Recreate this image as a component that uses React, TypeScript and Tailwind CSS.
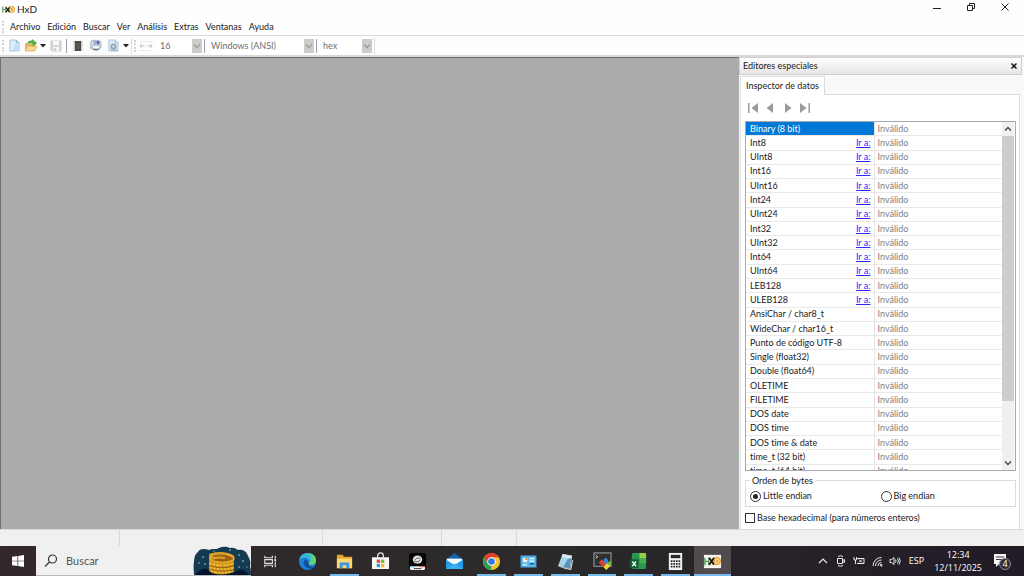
import type { ReactNode } from "react";
import clsx from "clsx";

const menus = ["Archivo", "Edición", "Buscar", "Ver", "Análisis", "Extras", "Ventanas", "Ayuda"];

const rows: { name: string; link?: boolean }[] = [
  { name: "Binary (8 bit)" },
  { name: "Int8", link: true },
  { name: "UInt8", link: true },
  { name: "Int16", link: true },
  { name: "UInt16", link: true },
  { name: "Int24", link: true },
  { name: "UInt24", link: true },
  { name: "Int32", link: true },
  { name: "UInt32", link: true },
  { name: "Int64", link: true },
  { name: "UInt64", link: true },
  { name: "LEB128", link: true },
  { name: "ULEB128", link: true },
  { name: "AnsiChar / char8_t" },
  { name: "WideChar / char16_t" },
  { name: "Punto de código UTF-8" },
  { name: "Single (float32)" },
  { name: "Double (float64)" },
  { name: "OLETIME" },
  { name: "FILETIME" },
  { name: "DOS date" },
  { name: "DOS time" },
  { name: "DOS time & date" },
  { name: "time_t (32 bit)" },
  { name: "time_t (64 bit)" },
];

function HxDLogo({ className }: { className?: string }) {
  return (
    <svg viewBox="0 0 18 14" className={className} aria-hidden="true">
      <path d="M1 3v8M5 3v8M1 7h4" stroke="#5f9a62" strokeWidth="1.6" fill="none" />
      <circle cx="13" cy="7" r="4.8" fill="#e7a52e" />
      <path d="M11.5 4.2h1.6a2.7 2.7 0 0 1 0 5.6h-1.6z" stroke="#fbe6a8" strokeWidth="1.3" fill="none" />
      <path d="M5.5 4l5 6.5M10.5 4l-5 6.5" stroke="#161616" strokeWidth="1.8" />
    </svg>
  );
}

function Grip() {
  return <span className="h-3 border-l-2 border-dotted border-gray-300" />;
}

function Chevron({ className }: { className?: string }) {
  return (
    <svg viewBox="0 0 8 8" className={className} fill="none" stroke="currentColor" strokeWidth="1.3" aria-hidden="true">
      <path d="M1 2.5l3 3 3-3" />
    </svg>
  );
}

function Caret() {
  return (
    <svg viewBox="0 0 6 4" className="ml-[2px] h-1 w-1.5 shrink-0" aria-hidden="true">
      <path d="M0 0h6L3 3.5z" fill="#222" />
    </svg>
  );
}

function ToolButton({ label, children }: { label: string; children: ReactNode }) {
  return (
    <button type="button" aria-label={label} className="flex h-4 shrink-0 items-center justify-center">
      {children}
    </button>
  );
}

function Combo({ label, value, className }: { label: string; value: string; className: string }) {
  return (
    <div className={clsx("relative h-4 shrink-0", className)}>
      <select
        aria-label={label}
        disabled
        className="h-full w-full appearance-none bg-white pl-1 text-[9px] text-[#6d6d6d] opacity-100"
      >
        <option>{value}</option>
      </select>
      <span className="pointer-events-none absolute inset-y-px right-0 flex w-[10px] items-center justify-center bg-[#cccccc] text-[#9a9a9a]">
        <Chevron className="size-2" />
      </span>
    </div>
  );
}

function TitleBar() {
  return (
    <header className="flex h-[18px] items-center justify-between pl-[2px]">
      <div className="flex items-center gap-[2px]">
        <HxDLogo className="h-[11px] w-[13px]" />
        <h1 className="text-[10px]">HxD</h1>
      </div>
      <div className="flex gap-[22px] pr-[13px] pb-1 text-[#222]">
        <button type="button" aria-label="Minimizar">
          <svg viewBox="0 0 12 12" className="size-3" stroke="currentColor">
            <path d="M2 7.5h8" />
          </svg>
        </button>
        <button type="button" aria-label="Restaurar">
          <svg viewBox="0 0 12 12" className="size-3" stroke="currentColor" fill="none">
            <path d="M2.5 4.5h5v5h-5zM4.5 4V2.5h5v5H8" />
          </svg>
        </button>
        <button type="button" aria-label="Cerrar">
          <svg viewBox="0 0 12 12" className="size-3" stroke="currentColor">
            <path d="M2.5 2.5l7 7M9.5 2.5l-7 7" />
          </svg>
        </button>
      </div>
    </header>
  );
}

function Toolbar() {
  return (
    <div className="flex h-[21px] items-center border-b-2 border-[#d9d9d9] bg-[#fdfdfd] pl-[2px]">
      <div className="flex items-center">
        <Grip />
        <div className="flex items-center gap-1 pl-[5px]">
          <ToolButton label="Nuevo">
            <svg viewBox="0 0 12 14" className="h-[13px] w-[11px]">
              <path d="M1 1h7l3 3v9H1z" fill="#dff0fc" stroke="#9fc3df" />
              <path d="M8 1v3h3" fill="#fff" stroke="#78a8cf" />
              <path d="M6 6h4v6H4z" fill="#bfe0f7" />
            </svg>
          </ToolButton>
          <ToolButton label="Abrir">
            <svg viewBox="0 0 14 13" className="h-[13px] w-[14px]">
              <path d="M1 4h4l1 1h5v7H1z" fill="#e6b95a" />
              <path d="M3 7h10l-2 5H1z" fill="#f6d98c" stroke="#d5a040" strokeWidth=".6" />
              <path d="M3 5c1-3 3-4 5-3.5V0l5 4-4 4V5.5C7 4 5 4 3 5z" fill="#4fae4a" />
            </svg>
            <Caret />
          </ToolButton>
          <ToolButton label="Guardar">
            <svg viewBox="0 0 12 12" className="size-3">
              <path d="M1 1h10v10H2l-1-1z" fill="#d6d6d6" stroke="#cbcbcb" />
              <path d="M3 1h6v4H3z" fill="#f9f9f9" />
              <path d="M3 7h6v4H3z" fill="#f2f2f2" />
              <path d="M4 8h1.5v3H4z" fill="#c4c4c4" />
            </svg>
          </ToolButton>
        </div>
        <span className="ml-1 h-[14px] w-px bg-gray-400" />
        <div className="flex items-center gap-[5px] pl-[5px]">
          <ToolButton label="Abrir RAM">
            <svg viewBox="0 0 12 12" className="size-3">
              <path d="M2.5 1.5v9M9.5 1.5v9" stroke="#9a9a9a" strokeDasharray="1 1" strokeWidth="2" />
              <path d="M3 1h6v10H3z" fill="#4b4b4b" />
              <path d="M4.5 3h3v6h-3z" fill="#5c5c5c" />
            </svg>
          </ToolButton>
          <ToolButton label="Abrir disco">
            <svg viewBox="0 0 14 13" className="h-[13px] w-[14px]">
              <path d="M2 2l5-1 5 2v6l-5 3-6-3z" fill="#d3d8e2" stroke="#a0a8b9" strokeWidth=".7" />
              <path d="M4 1.5h7v4H5z" fill="#a3acdd" />
              <path d="M9 2v3" stroke="#39439f" strokeWidth="1.4" />
              <ellipse cx="7" cy="8" rx="4" ry="2" fill="#f4f6fa" stroke="#9aa1af" strokeWidth=".7" />
              <path d="M4 10.5h6" stroke="#777" />
            </svg>
          </ToolButton>
          <ToolButton label="Abrir imagen de disco">
            <svg viewBox="0 0 12 14" className="mr-[2px] h-[13px] w-[11px]">
              <path d="M1 1h7l3 3v9H1z" fill="#dcebf8" stroke="#a9c2da" />
              <path d="M8 1v3h3" fill="#fff" stroke="#8fb0cf" />
              <circle cx="6" cy="8" r="3.3" fill="#8ca5c0" />
              <circle cx="6" cy="8" r="1.2" fill="#eaf2f9" />
              <path d="M3 12h7" stroke="#8c99a9" />
            </svg>
            <Caret />
          </ToolButton>
        </div>
      </div>
      <div className="ml-[2px] flex items-center border-l border-[#dedede] pl-[2px]">
        <Grip />
        <svg viewBox="0 0 14 12" className="mx-[3px] h-3 w-[14px]" fill="none" stroke="#c2c2c2" aria-hidden="true">
          <path d="M1 6h4.5M13 6H8.5M3 4L1 6l2 2M11 4l2 2-2 2" />
          <path d="M1 1.5h12M1 10.5h12" stroke="#ebebeb" />
        </svg>
        <Combo label="Bytes por fila" value="16" className="w-[46px]" />
        <span className="mx-[2px] h-[14px] w-px bg-gray-400" />
        <Combo label="Juego de caracteres" value="Windows (ANSI)" className="w-[107px]" />
        <span className="mx-[2px] h-[14px] w-px bg-gray-400" />
        <Combo label="Base de desplazamiento" value="hex" className="w-[53px]" />
        <span className="ml-[2px] h-4 w-px bg-[#dedede]" />
      </div>
    </div>
  );
}

function NavButton({ label, path }: { label: string; path: string }) {
  return (
    <button type="button" aria-label={label}>
      <svg viewBox="0 0 11 10" className="h-[10px] w-[11px]" fill="#9b9b9b">
        <path d={path} />
      </svg>
    </button>
  );
}

function DataTable() {
  return (
    <div className="flex min-h-0 flex-1 overflow-hidden border border-[#a5a9b0] bg-white pr-px">
      <div className="min-w-0 flex-1 overflow-hidden">
        <table className="h-[357px] w-full table-fixed border-collapse leading-[12px]">
          <colgroup>
            <col className="w-1/2" />
            <col className="w-1/2" />
          </colgroup>
          <tbody>
            {rows.map((row, i) => (
              <tr key={row.name} className="border-b border-[#e9e9e9]">
                <td
                  className={clsx(
                    "overflow-hidden border-r border-[#e3e3e3] py-0 pr-[3px] pl-1 whitespace-nowrap",
                    i === 0 && "bg-[#0078d7] text-white",
                  )}
                >
                  <div className="flex justify-between">
                    <span>{row.name}</span>
                    {row.link && (
                      <a href="#" className="text-[#2a2aff] underline">
                        Ir a:
                      </a>
                    )}
                  </div>
                </td>
                <td className="py-0 pl-[3px] text-[#808080]">Inválido</td>
              </tr>
            ))}
          </tbody>
        </table>
      </div>
      <div className="flex w-3 flex-col items-center bg-[#f0f0f0] text-[#444]">
        <Chevron className="my-[3px] size-2 shrink-0 rotate-180" />
        <div className="w-full grow-[267] bg-[#cdcdcd]" />
        <div className="w-full grow-[55]" />
        <Chevron className="my-[3px] size-2 shrink-0" />
      </div>
    </div>
  );
}

function Inspector() {
  return (
    <aside className="flex w-[285px] shrink-0 flex-col bg-[#f9f9f9] pr-[2px]">
      <div className="flex h-[18px] shrink-0 items-center justify-between border border-[#cfcfcf] bg-linear-to-b from-white to-[#e6e6e6] pr-[3px] pl-[3px]">
        <h2>Editores especiales</h2>
        <button type="button" aria-label="Cerrar panel">
          <svg viewBox="0 0 8 8" className="size-2" stroke="#111" strokeWidth="1.5">
            <path d="M1.5 1.5l5 5M6.5 1.5l-5 5" />
          </svg>
        </button>
      </div>
      <div className="flex min-h-0 flex-1 flex-col pt-px pr-[2px] pl-px">
        <div role="tablist" className="flex">
          <button
            role="tab"
            aria-selected="true"
            type="button"
            className="relative z-10 -mb-px h-[19px] border border-b-0 border-[#dcdcdc] bg-white px-[5px]"
          >
            Inspector de datos
          </button>
        </div>
        <div className="flex min-h-0 flex-1 flex-col border border-b-0 border-[#dcdcdc] bg-white pr-[3px] pl-1">
          <div className="flex h-[26px] shrink-0 items-center gap-[6px] pl-[3px]">
            <NavButton label="Primero" path="M0 0h1.5v10H0zM10 0v10L3.5 5z" />
            <NavButton label="Anterior" path="M8 0v10L1.5 5z" />
            <NavButton label="Siguiente" path="M3 0v10l6.5-5z" />
            <NavButton label="Último" path="M1 0v10l6.5-5zM9.5 0H11v10H9.5z" />
          </div>
          <DataTable />
          <fieldset className="mt-1 shrink-0 border border-[#dcdcdc] px-1 pb-1">
            <legend className="px-[2px] leading-[11px]">Orden de bytes</legend>
            <div className="grid grid-cols-2 pt-1 leading-[12px]">
              <label className="flex items-center gap-[2px]">
                <input
                  type="radio"
                  name="order"
                  defaultChecked
                  className="size-[11px] appearance-none rounded-full border border-[#333] bg-white bg-clip-content p-[2px] checked:bg-[#222]"
                />
                Little endian
              </label>
              <label className="flex items-center gap-[2px]">
                <input
                  type="radio"
                  name="order"
                  className="size-[11px] appearance-none rounded-full border border-[#333] bg-white bg-clip-content p-[2px] checked:bg-[#222]"
                />
                Big endian
              </label>
            </div>
          </fieldset>
          <label className="flex h-[22px] shrink-0 items-center gap-[2px]">
            <input type="checkbox" className="size-[10px] appearance-none border border-[#333] bg-white checked:bg-[#333]" />
            Base hexadecimal (para números enteros)
          </label>
        </div>
      </div>
    </aside>
  );
}

const apps: { name: string; running?: boolean; active?: boolean; icon: ReactNode }[] = [
  {
    name: "Vista de tareas",
    icon: (
      <g fill="none" stroke="#dedede" strokeWidth="1.2">
        <path d="M4 4v2h8V4M4 16v-2h8v2M4 8h8v4H4zM15 4v3M15 10v6" />
        <path d="M14 8.5h2" strokeWidth="2" />
      </g>
    ),
  },
  {
    name: "Microsoft Edge",
    icon: (
      <>
        <circle cx="10" cy="10" r="9" fill="#1b80d4" />
        <path d="M1 9C2 3 6 1 10 1c6 0 9 4 9 8 0 3-2 4.5-5 4.5-2 0-3-1-2-2.5C13 8 10 6 7 6 4 6 2 7 1 9z" fill="#38b6d8" />
        <path d="M12 1.3c5 1 7 4.5 7 7.7 0 3-2 4.5-5 4.5-2 0-3-1-2-2.5 2-3 3-6 0-9.7z" fill="#62d36c" />
        <path d="M7 8c-3 5 1 10 7 9.5 2-.2 3-1 4-2-4 1-8-1-7-5-1-2-3-3-4-2.5z" fill="#124f9e" />
      </>
    ),
  },
  {
    name: "Explorador de archivos",
    running: true,
    icon: (
      <>
        <path d="M2 3h6l1.5 2H18v12H2z" fill="#e5a82e" />
        <path d="M2 7h16v10H2z" fill="#fbd774" />
        <path d="M5 17v-6h10v6h-3v-3H8v3z" fill="#3f95dc" />
      </>
    ),
  },
  {
    name: "Microsoft Store",
    icon: (
      <>
        <path d="M7 6V4a3 3 0 0 1 6 0v2" fill="none" stroke="#e8e8e8" strokeWidth="1.3" />
        <path d="M1 5.5h18V17a1 1 0 0 1-1 1H2a1 1 0 0 1-1-1z" fill="#f7f7f7" />
        <path d="M6 8h3.5v3.5H6z" fill="#e84e2c" />
        <path d="M10.5 8H14v3.5h-3.5z" fill="#76b82a" />
        <path d="M6 12.5h3.5V16H6z" fill="#2a9bdf" />
        <path d="M10.5 12.5H14V16h-3.5z" fill="#f4b820" />
      </>
    ),
  },
  {
    name: "Cámara",
    icon: (
      <>
        <rect x="1" y="1" width="18" height="18" rx="3" fill="#050505" />
        <ellipse cx="10" cy="8" rx="5" ry="4.2" fill="#e4e4e4" />
        <path d="M7 9c1-3 5-3 6-2M7 10c3 1 5 0 6-2" fill="none" stroke="#333" strokeWidth=".8" />
        <path d="M2 15h16v2a2 2 0 0 1-2 2H4a2 2 0 0 1-2-2z" fill="#f5f5f5" />
        <path d="M2 15h6v1H2z" fill="#56bcd0" />
        <path d="M12 15h6v1h-6z" fill="#e65353" />
        <path d="M6 17.5h8" stroke="#333" />
      </>
    ),
  },
  {
    name: "Correo",
    icon: (
      <>
        <path d="M1 8l9-7 9 7v10H1z" fill="#1663ad" />
        <path d="M2 7h16v8H2z" fill="#f4f9fd" />
        <path d="M1 8l9 6 9-6v10H1z" fill="#249be4" />
        <path d="M1 18L10 12l9 6z" fill="#39b0ef" />
      </>
    ),
  },
  {
    name: "Google Chrome",
    running: true,
    icon: (
      <>
        <circle cx="10" cy="10" r="9" fill="#f6c52c" />
        <path d="M2.2 5.5A9 9 0 0 1 17.8 5.5H10L6 12z" fill="#e2402f" />
        <path d="M2.2 5.5L6.2 12.3 10 14.5 9.5 19A9 9 0 0 1 2.2 5.5z" fill="#2fa04f" />
        <circle cx="10" cy="10" r="4.5" fill="#fff" />
        <circle cx="10" cy="10" r="3.5" fill="#3478e5" />
      </>
    ),
  },
  {
    name: "Panel de control",
    running: true,
    icon: (
      <>
        <rect x="2" y="4" width="16" height="12" fill="#67bcec" stroke="#3785bc" />
        <circle cx="6.5" cy="8.5" r="2.5" fill="#eaf6fd" />
        <path d="M6.5 8.5V6A2.5 2.5 0 0 1 9 8.5z" fill="#f09a36" />
        <path d="M11 7h5M11 9.5h5M4 13.5h4" stroke="#eaf6fd" strokeWidth="1.3" />
        <path d="M11 12.5h5" stroke="#1c6aa8" strokeWidth="1.8" />
      </>
    ),
  },
  {
    name: "Bloc de notas",
    running: true,
    icon: (
      <>
        <path d="M7 2l10 2-2 14-13-3z" fill="#a9d3e8" />
        <path d="M7 2l10 2-1 3-10-2z" fill="#dfeaf0" />
        <path d="M12 8l4-2-1.5 11-7-1z" fill="#5d93b8" />
        <path d="M2 15l13 3 2-10 1 1-2 10-6-1z" fill="#d9dde0" />
      </>
    ),
  },
  {
    name: "Terminal",
    running: true,
    icon: (
      <>
        <rect x="1" y="1" width="18" height="14" fill="#303030" stroke="#a8a8a8" />
        <path d="M3 3.5l2 1.5-2 1.5" fill="none" stroke="#e3e3e3" />
        <path d="M6 11l3-3 3 2 1 4-2 2z" fill="#e33d2d" />
        <path d="M11 8l3-2 2 3-1 4-3-1z" fill="#3e82de" />
        <path d="M11 16l3-4 5-1-1 4-4 4z" fill="#e8d337" />
        <path d="M15 11l4-2v3l-3 2z" fill="#58b848" />
      </>
    ),
  },
  {
    name: "Excel",
    running: true,
    icon: (
      <>
        <rect x="3" y="1" width="15" height="17" rx="1.5" fill="#25984d" />
        <path d="M11 1h5.5A1.5 1.5 0 0 1 18 2.5V7h-7z" fill="#96cf4b" />
        <path d="M3 7h15v5H3z" fill="#1f8043" />
        <path d="M11 7h7v5h-7z" fill="#45ad55" />
        <rect x="1" y="8" width="9" height="9" rx="1" fill="#125e34" />
        <path d="M3.5 10l4 5M7.5 10l-4 5" stroke="#fff" strokeWidth="1.3" />
      </>
    ),
  },
  {
    name: "Calculadora",
    running: true,
    icon: (
      <>
        <path d="M3 1h14v18H3z" fill="#f3f3f3" />
        <path d="M5 3h10v3.5H5z" fill="#2c2729" />
        <path d="M5 9.5h10M5 12.5h10M5 15.5h10" stroke="#2c2729" strokeWidth="1.8" strokeDasharray="1.8 .93" />
      </>
    ),
  },
  {
    name: "HxD",
    running: true,
    active: true,
    icon: (
      <>
        <path d="M1 3h18v14H1z" fill="#f6f6f1" />
        <path d="M2 6v8M6 6v8M2 10h4" stroke="#5f9a62" strokeWidth="1.5" />
        <circle cx="14.5" cy="9.5" r="4.5" fill="#e9a73a" />
        <path d="M13.5 7h1a2.5 2.5 0 0 1 0 5h-1z" fill="none" stroke="#fdebb7" />
        <path d="M6.5 6l5 7.5M11.5 6l-5 7.5" stroke="#161616" strokeWidth="1.8" />
      </>
    ),
  },
];

function SearchArt() {
  return (
    <svg viewBox="0 0 58 29" className="h-[29px] w-[58px] shrink-0" aria-hidden="true">
      <path d="M1 29C1 24 0 20 1 16c0-4 1-8 4-10 1-3 6-4 11-2 3-2 7 0 10-2 4-2 8-1 11 0 4-1 6 1 8 2 5-1 9 2 10 6 2 3 3 7 2 10 1 3 1 6 1 9z" fill="#153b52" />
      <path d="M2 29c4-4 7-7 12-6l12 5 15-1c5-5 9-5 15 2z" fill="#04142c" />
      <path d="M16 8v17c5 5 21 4 25 0V10C35 6 22 6 16 8z" fill="#c98a18" />
      <ellipse cx="29" cy="12.5" rx="12" ry="4" fill="#9a6010" stroke="#e8ae2f" strokeWidth="1.5" />
      <path d="M17 9c8-3.5 19-2 24 2M18 13c5-2 9-2 14-1" fill="none" stroke="#e0a22c" strokeWidth="2" />
      <path d="M20 10c6-2 12-1 16 1" fill="none" stroke="#8a560f" />
      <path d="M16.5 17c6 3 19 3 24 0M17 21c6 3 18 3 24 0M18 25c6 2 17 2 22 0" fill="none" stroke="#eebc35" strokeWidth="2.2" strokeDasharray="2.5 1" />
      <path d="M17 19.5c6 3 18 3 24 0M18 23.5c6 2 17 2 23 0" fill="none" stroke="#8a560f" strokeWidth=".8" />
      <g fill="#c6e2ee">
        <circle cx="10" cy="11" r=".8" />
        <circle cx="6" cy="17" r=".7" />
        <circle cx="12" cy="18" r=".7" />
        <circle cx="21" cy="5" r=".6" />
        <circle cx="37" cy="4" r=".8" />
        <circle cx="46" cy="9" r=".8" />
        <circle cx="50" cy="15" r=".8" />
        <circle cx="46" cy="21" r=".7" />
        <circle cx="54" cy="21" r=".6" />
      </g>
    </svg>
  );
}

function TrayIcon({ label, children }: { label: string; children: ReactNode }) {
  return (
    <button type="button" aria-label={label}>
      <svg viewBox="0 0 12 12" className="size-3" fill="none" stroke="#e8e8e8">
        {children}
      </svg>
    </button>
  );
}

function Taskbar() {
  return (
    <footer className="flex h-[30px] shrink-0 bg-linear-to-r from-[#33282a] via-[#2c2a2a] to-[#211b26] text-white">
      <button type="button" aria-label="Inicio" className="flex w-9 shrink-0 items-center justify-center">
        <svg viewBox="0 0 12 12" className="size-3" fill="#fff">
          <path d="M0 1.7L5.5 1v4.7H0zM6.2.9L12 0v5.7H6.2zM0 6.3h5.5V11L0 10.3zM6.2 6.3H12V12l-5.8-.9z" />
        </svg>
      </button>
      <label className="flex w-[215px] shrink-0 items-center border-b border-[#bbb] bg-[#f0f0f0] pl-2 text-[#444]">
        <svg viewBox="0 0 14 14" className="size-[14px] shrink-0" fill="none" stroke="#333" strokeWidth="1.2">
          <circle cx="8.5" cy="5" r="4" />
          <path d="M5.5 8L1 12.5" />
        </svg>
        <input
          type="text"
          aria-label="Buscar"
          placeholder="Buscar"
          className="min-w-0 flex-1 pt-px pl-2 text-[11px] outline-none placeholder:text-[#555]"
        />
        <SearchArt />
      </label>
      <nav className="ml-px grid w-[479px] grid-cols-13">
        {apps.map((app) => (
          <button
            key={app.name}
            type="button"
            aria-label={app.name}
            className={clsx("relative flex items-center justify-center", app.active && "bg-[#514b50]")}
          >
            <svg viewBox="0 0 20 20" className="size-[19px]">
              {app.icon}
            </svg>
            {app.running && (
              <span className={clsx("absolute bottom-0 h-[2px] bg-[#76b9ed]", app.active ? "inset-x-0" : "inset-x-1")} />
            )}
          </button>
        ))}
      </nav>
      <div className="ml-auto flex items-center gap-[6px] pr-3 font-['Open_Sans','Noto_Sans',sans-serif]">
        <TrayIcon label="Iconos ocultos">
          <path d="M2 8l4-4 4 4" strokeWidth="1.2" />
        </TrayIcon>
        <TrayIcon label="Reunirse ahora">
          <path d="M2.5 3.5h5v5h-5zM7.5 5.5l2-1v3l-2-1M3 1.5q2.5-1.5 5 0M3 10.5q2.5 1.5 5 0" />
        </TrayIcon>
        <TrayIcon label="Batería">
          <path d="M4 3.5h7v5H4M6 4.5l3 3M9 4.5l-3 3M1 2v3h2.5V2M2.5 5v4" />
        </TrayIcon>
        <TrayIcon label="Red">
          <path d="M2 11a8.5 8.5 0 0 1 8.5-8.5M4.5 11A6 6 0 0 1 10.5 5M7 11a3.5 3.5 0 0 1 3.5-3.5" />
          <path d="M9 10h1.5v1.5" strokeWidth="1.5" />
        </TrayIcon>
        <TrayIcon label="Volumen">
          <path d="M1 4.5h1.5L5 2.5v7l-2.5-2H1zM6.5 4.5q1 1.5 0 3M8.5 3.5q1.8 2.5 0 5M10 2.5q2.5 3.5 0 7" />
        </TrayIcon>
        <button type="button" className="ml-[2px] text-[9px]">
          ESP
        </button>
        <div className="ml-1 text-center text-[9px] leading-[13px]">
          <p>12:34</p>
          <p>12/11/2025</p>
        </div>
        <button type="button" aria-label="4 notificaciones" className="ml-1">
          <svg viewBox="0 0 20 20" className="size-5">
            <path d="M2 3h12v10H7l-3 3v-3H2z" fill="#f5f5f5" />
            <path d="M4 6h8M4 8.5h8" stroke="#3a3439" />
            <circle cx="13" cy="13" r="5.5" fill="#332e35" stroke="#8d8a8f" />
            <text x="13" y="16" textAnchor="middle" fontSize="9" fill="#fff">
              4
            </text>
          </svg>
        </button>
      </div>
    </footer>
  );
}

export default function App() {
  return (
    <div className="flex h-screen flex-col overflow-hidden bg-[#fefefe] font-['Lato','Open_Sans',sans-serif] text-[9px] text-[#1a1a1a] [font-variant-ligatures:none]">
      <TitleBar />
      <nav className="flex h-[18px] shrink-0 items-center border-b border-[#dcdcdc] pl-[2px]">
        <Grip />
        <div className="flex gap-[7px] pl-[6px]">
          {menus.map((menu) => (
            <button key={menu} type="button">
              {menu}
            </button>
          ))}
        </div>
      </nav>
      <Toolbar />
      <main className="flex min-h-0 flex-1">
        <section className="flex-1 border-t border-l border-[#6e6e6e] bg-[#ababab]" />
        <Inspector />
      </main>
      <div className="flex h-[17px] shrink-0 border-t border-[#dadada] bg-[#f0f0f0]">
        <span className="w-[120px] border-r border-[#dadada]" />
        <span className="w-[203px] border-r border-[#dadada]" />
        <span className="w-[119px] border-r border-[#dadada]" />
        <span className="w-[75px] border-r border-[#dadada]" />
      </div>
      <Taskbar />
    </div>
  );
}
